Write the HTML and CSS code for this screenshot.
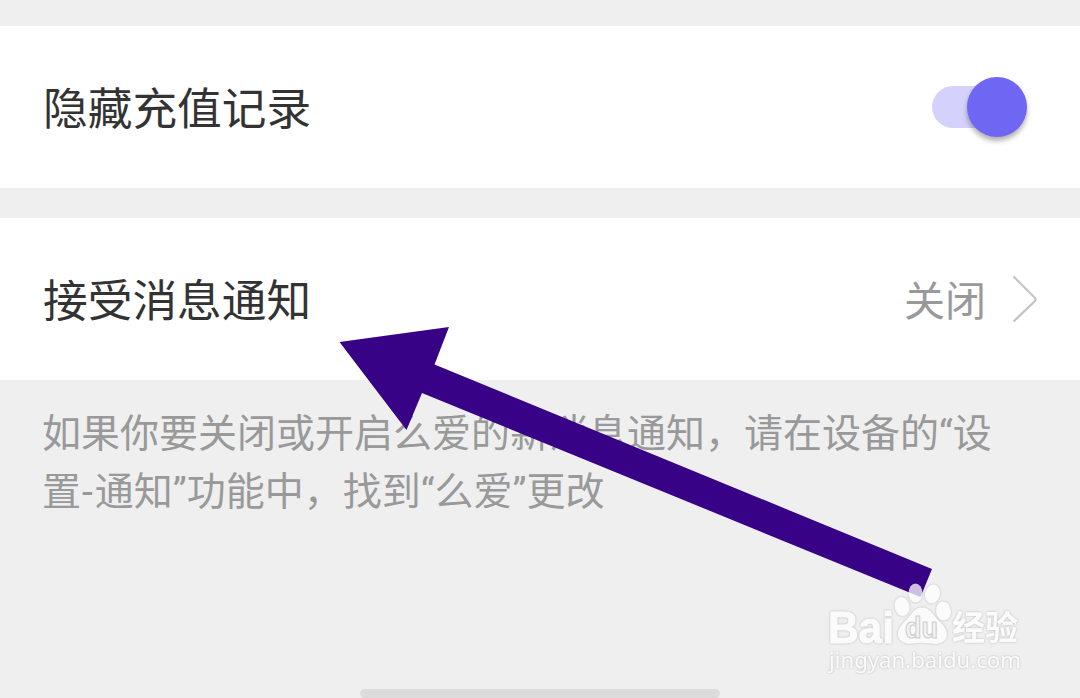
FILE: index.html
```
<!DOCTYPE html>
<html lang="zh-CN">
<head>
    <meta charset="UTF-8">
    <meta name="viewport" content="width=device-width, initial-scale=1.0">
    <title>消息通知</title>
    <link rel="stylesheet" href="styles.css">
</head>
<body>
    <div class="page">
        <div class="row">
            <div class="label">隐藏充值记录</div>
            <div class="switch">
                <div class="knob"></div>
            </div>
        </div>
        <div class="row">
            <div class="label">接受消息通知</div>
            <div class="value">
                <span class="state">关闭</span>
                <svg class="chevron" width="25" height="48" viewBox="0 0 25 48">
                    <path d="M1.500 1.500L23 23Q24.300 24.500 23 26L1.500 46.500" />
                </svg>
            </div>
        </div>
        <div class="hint">如果你要关闭或开启么爱的新消息通知，请在设备的“设<br>置<span class="dash">-</span>通知”功能中，找到“么爱”更改</div>
        <div class="home-bar"></div>

        <!-- arrow over the list -->
        <svg class="arrow" width="1080" height="698" viewBox="0 0 1080 698">
            <polygon points="339.5,342 449,327 434.5,364.5 932,569 920.5,597 422,393 406.5,430" />
        </svg>

        <!-- watermark -->
        <svg class="watermark" width="220" height="110" viewBox="820 575 220 110">
            <g class="mark">
                <text class="bai" x="828" y="642.5" textLength="66" lengthAdjust="spacingAndGlyphs">Bai</text>
                <ellipse cx="902" cy="606.5" rx="7.5" ry="9.5" transform="rotate(-12 902 606.5)" />
                <ellipse cx="915.5" cy="593" rx="7" ry="9.5" />
                <ellipse cx="932.5" cy="594" rx="7.5" ry="9.5" transform="rotate(14 932.5 594)" />
                <ellipse cx="943.5" cy="611" rx="7.5" ry="9.5" transform="rotate(-8 943.5 611)" />
                <path d="M922 607.500C930 607.500 933 615 939 621C945 626 948 631 946.500 637C944.500 643 938 645 931 643.500C925 642.500 919 642.500 913 643.500C905 645 898 641 898 634C898 628 903 623 907 619C912 614 914 607.500 922 607.500Z" />
                <text class="jy" x="952" y="640" textLength="66" lengthAdjust="spacingAndGlyphs">经验</text>
                <text class="site" x="829" y="668" textLength="192" lengthAdjust="spacingAndGlyphs">jingyan.baidu.com</text>
            </g>
            <text class="du" x="905" y="638" textLength="33" lengthAdjust="spacingAndGlyphs">du</text>
        </svg>
    </div>
</body>
</html>
```
FILE: styles.css
```
body{
    margin: 0;
    background-color: #efefef;
    font-family: Roboto, "Noto Sans CJK SC", sans-serif;
}
.page{
    position: relative;
    box-sizing: border-box;
    height: 698px;
    padding-top: 26px;
    overflow: hidden;
    display: flex;
    flex-direction: column;
}
.row{
    box-sizing: border-box;
    height: 162px;
    margin-bottom: 30px;
    padding: 0 43px;
    background-color: white;
    display: flex;
    align-items: center;
    justify-content: space-between;
}
.label{
    padding-top: 6px;
    font-size: 44.7px;
    line-height: 60px;
    color: #333;
}
.switch{
    width: 90px;
    height: 42px;
    margin-right: 15px;
    border-radius: 21px;
    background-color: #d4d1fc;
    display: flex;
    align-items: center;
    justify-content: flex-end;
}
.knob{
    flex: none;
    width: 60px;
    height: 60px;
    margin-right: -5px;
    border-radius: 50%;
    background-color: #7066f4;
    box-shadow: 0 4px 5px rgba(0,0,0,0.3);
}
.value{
    display: flex;
    align-items: center;
    gap: 26px;
    font-size: 41px;
    line-height: 60px;
    color: #999;
}
.state{
    padding-top: 5px;
}
.chevron{
    fill: none;
    stroke: #c4c4c4;
    stroke-width: 2.2;
}
.hint{
    padding-left: 42px;
    margin-top: -5px;
    font-size: 39px;
    line-height: 58px;
    color: #999;
    white-space: nowrap;
}
.dash{
    padding: 0 2px 0 1px;
}
.home-bar{
    width: 360px;
    height: 9px;
    margin: auto auto 0;
    border-radius: 5px;
    background-color: #dcdcdc;
}
.arrow{
    position: absolute;
    top: 0;
    left: 0;
    fill: #370286;
}
.watermark{
    position: absolute;
    top: 575px;
    left: 820px;
}
.mark{
    fill: white;
    opacity: 0.75;
    filter: drop-shadow(0 0 1px rgba(0,0,0,0.3));
}
.bai{
    font-family: "Liberation Sans", sans-serif;
    font-size: 44px;
    font-weight: bold;
    stroke: white;
    stroke-width: 1;
}
.jy{
    font-family: "Noto Sans CJK SC", sans-serif;
    font-size: 34px;
    font-weight: bold;
}
.site{
    font-family: "Noto Sans", sans-serif;
    font-size: 21px;
}
.du{
    font-family: "Liberation Sans", sans-serif;
    font-size: 29px;
    font-weight: bold;
    fill: #f4f4f4;
    stroke: #cfcfcf;
    stroke-width: 1.2;
}
```
